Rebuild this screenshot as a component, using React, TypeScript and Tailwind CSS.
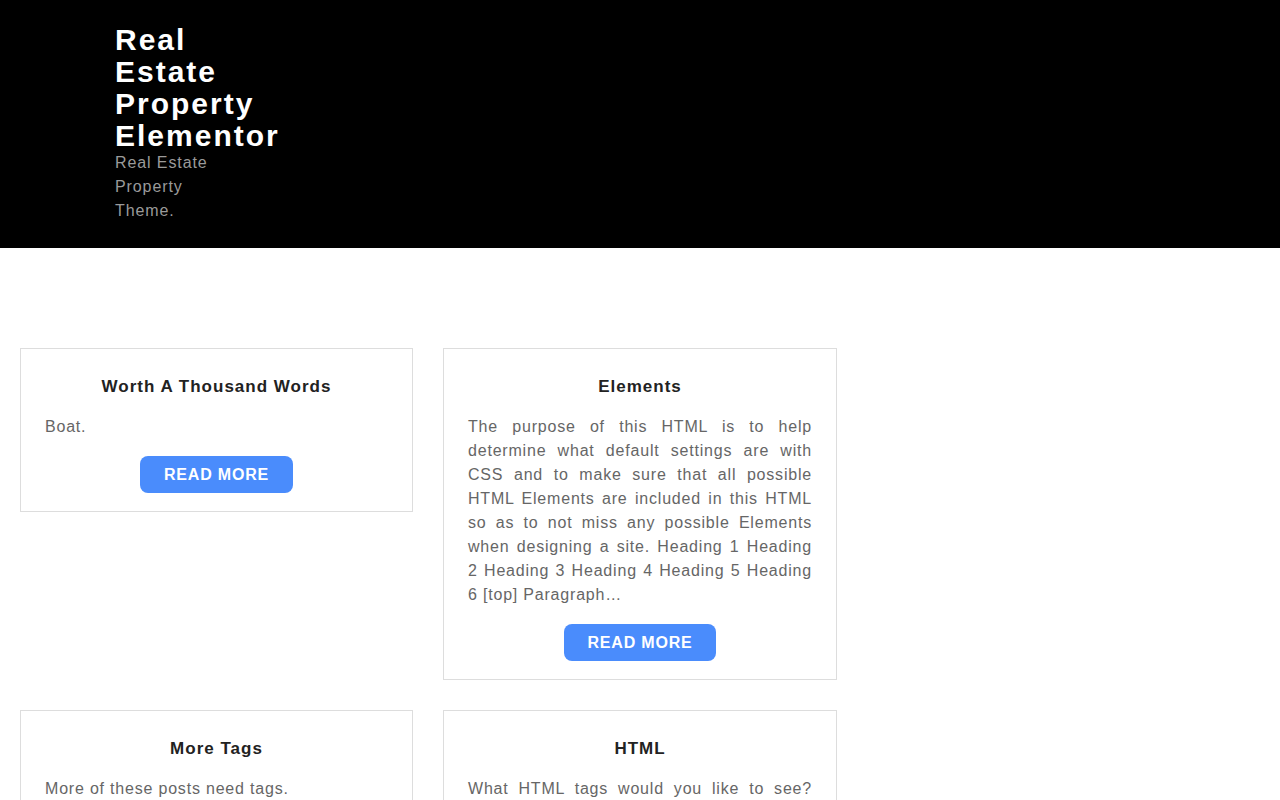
const posts = [
    {
        title: "Worth A Thousand Words",
        excerpt: "Boat.",
    },
    {
        title: "Elements",
        excerpt:
            "The purpose of this HTML is to help determine what default settings are with CSS and to make sure that all possible HTML Elements are included in this HTML so as to not miss any possible Elements when designing a site. Heading 1 Heading 2 Heading 3 Heading 4 Heading 5 Heading 6 [top] Paragraph…",
    },
    {
        title: "More Tags",
        excerpt: "More of these posts need tags.",
    },
    {
        title: "HTML",
        excerpt:
            "What HTML tags would you like to see? Please leave a comment below and we will add them to this post so that everyone can see.",
    },
];

export default function App() {
    return (
        <div className="min-h-screen bg-white font-['Liberation_Sans',Arial,sans-serif]">
            <header className="h-[248px] bg-black">
                <div className="pl-[115px] pt-[24px] w-[245px]">
                    <h1 className="text-[30px] leading-[32px] font-bold tracking-[2px] text-white">
                        Real Estate Property Elementor
                    </h1>
                    <p className="-mt-px text-[16px] leading-[24px] tracking-[0.9px] text-[#9a9a9a]">
                        Real Estate Property Theme.
                    </p>
                </div>
            </header>

            <main className="pt-[100px] pl-[20px]">
                <div className="grid grid-cols-[393px_394px] gap-x-[30px] gap-y-[30px] items-start">
                    {posts.map((post) => (
                        <article
                            key={post.title}
                            className="border border-[#dddddd] px-[24px] pt-[25px] pb-[18px]"
                        >
                            <h2 className="text-center text-[17px] leading-[26px] font-bold tracking-[1px] text-[#222222]">
                                {post.title}
                            </h2>
                            <p className="mt-[15px] text-[16px] leading-[24px] tracking-[0.8px] text-[#666666] text-justify">
                                {post.excerpt}
                            </p>
                            <div className="mt-[17px] flex justify-center">
                                <a
                                    href="#"
                                    className="inline-flex h-[37px] items-center rounded-[8px] bg-[#4a8cfc] px-[24px] text-[16px] font-bold uppercase tracking-[0.8px] text-white"
                                >
                                    Read More
                                </a>
                            </div>
                        </article>
                    ))}
                </div>
            </main>
        </div>
    );
}
